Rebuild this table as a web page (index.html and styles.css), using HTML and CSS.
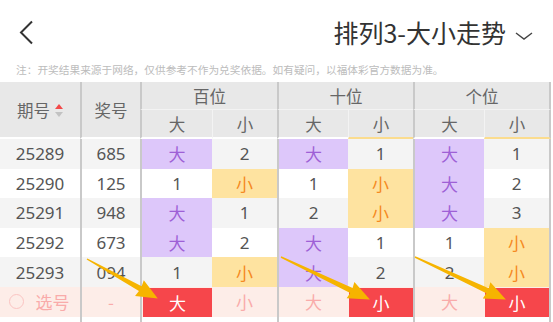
FILE: index.html
```html
<!DOCTYPE html>
<html lang="zh">
<head>
<meta charset="utf-8">
<link rel="stylesheet" href="styles.css">
</head>
<body>
<div class="page">
  <header class="topbar">
    <svg class="back" width="16" height="26" viewBox="0 0 16 26"><path d="M13 1.5 L2 12.5 L13 23.5" fill="none" stroke="#333" stroke-width="2"/></svg>
    <div class="title-wrap">
      <span class="title">排列3-大小走势</span>
      <svg class="chev" width="18" height="8" viewBox="0 0 18 8"><path d="M1 1 L9 7 L17 1" fill="none" stroke="#444" stroke-width="1.4"/></svg>
    </div>
  </header>
  <p class="note">注：开奖结果来源于网络，仅供参考不作为兑奖依据。如有疑问，以福体彩官方数据为准。</p>

  <div class="table">
    <div class="th span2 c1"><span>期号</span><span class="sort"><i class="up"></i><i class="down"></i></span></div>
    <div class="th span2 c2 sep">奖号</div>
    <div class="th grp sep">百位</div>
    <div class="th grp sep">十位</div>
    <div class="th grp sep last">个位</div>
    <div class="th sub sep">大</div><div class="th sub inner">小</div>
    <div class="th sub sep">大</div><div class="th sub inner mark">小</div>
    <div class="th sub sep">大</div><div class="th sub inner mark last">小</div>

    <div class="td g">25289</div><div class="td g sep">685</div>
    <div class="td g sep big">大</div><div class="td g">2</div>
    <div class="td g sep big">大</div><div class="td g">1</div>
    <div class="td g sep big">大</div><div class="td g last">1</div>

    <div class="td">25290</div><div class="td sep">125</div>
    <div class="td sep">1</div><div class="td small">小</div>
    <div class="td sep">1</div><div class="td small">小</div>
    <div class="td sep big">大</div><div class="td last">2</div>

    <div class="td g">25291</div><div class="td g sep">948</div>
    <div class="td g sep big">大</div><div class="td g">1</div>
    <div class="td g sep">2</div><div class="td g small">小</div>
    <div class="td g sep big">大</div><div class="td g last">3</div>

    <div class="td">25292</div><div class="td sep">673</div>
    <div class="td sep big">大</div><div class="td">2</div>
    <div class="td sep big">大</div><div class="td">1</div>
    <div class="td sep">1</div><div class="td small last">小</div>

    <div class="td g">25293</div><div class="td g sep">094</div>
    <div class="td g sep">1</div><div class="td g small">小</div>
    <div class="td g sep big">大</div><div class="td g">2</div>
    <div class="td g sep">2</div><div class="td g small last">小</div>

    <div class="td pick c1"><span class="circle"></span><span>选号</span></div><div class="td pick sep">-</div>
    <div class="td pick sep"><span class="sel">大</span></div><div class="td pick">小</div>
    <div class="td pick sep">大</div><div class="td pick"><span class="sel">小</span></div>
    <div class="td pick sep">大</div><div class="td pick last"><span class="sel">小</span></div>

    <div class="tail"></div><div class="tail sep"></div><div class="tail sep"></div><div class="tail"></div><div class="tail sep"></div><div class="tail"></div><div class="tail sep"></div><div class="tail last"></div>
  </div>

  <svg class="arrows" width="553" height="322" viewBox="0 0 553 322">
    <g fill="#f6b400">
      <g transform="translate(87 259) rotate(29.1)"><polygon points="0,-0.7 61,-2.8 60,-9 81,0 60,9 61,2.8 0,0.7"/></g>
      <g transform="translate(281 257) rotate(25.5)"><polygon points="0,-0.7 78,-2.8 77,-9 98.5,0 77,9 78,2.8 0,0.7"/></g>
      <g transform="translate(415 257) rotate(25)"><polygon points="0,-0.7 80,-2.8 79,-9 100.3,0 79,9 80,2.8 0,0.7"/></g>
    </g>
  </svg>
</div>
</body>
</html>
```

FILE: styles.css
```css
* { box-sizing: border-box; margin: 0; padding: 0; }
html, body { background: #fff; }
body {
  font-family: "Noto Sans", "Noto Sans CJK SC", sans-serif;
  width: 553px;
  height: 322px;
  overflow: hidden;
}
.page { position: relative; width: 553px; height: 322px; }

.topbar {
  height: 62px;
  display: flex;
  align-items: center;
  justify-content: space-between;
  padding: 3px 20px 0 19px;
}
.back { display: block; }
.title-wrap { display: flex; align-items: center; gap: 9px; }
.title {
  font-size: 25px;
  color: #333;
  line-height: 1;
  font-family: "Noto Sans CJK SC", "Noto Sans", sans-serif;
}
.chev { display: block; margin-top: 7px; }

.note {
  font-size: 10.7px;
  line-height: 16px;
  height: 20px;
  color: #bcbcbc;
  padding-left: 16px;
  font-family: "Noto Sans CJK SC", sans-serif;
}

.table {
  display: grid;
  width: 551px;
  grid-template-columns: 80px 60px 72px 65px 71px 65px 71px 67px;
  grid-template-rows: 28px 29px repeat(6, 29.6px) 6px;
  font-size: 17px;
  color: #555;
}
.table > div {
  display: flex;
  align-items: center;
  justify-content: center;
}
.sep { border-left: 2px solid #c9c9c9; }
.last { border-right: 2px solid #c9c9c9; }

.th { background: #e8e8e8; color: #666; font-family: "Noto Sans CJK SC", sans-serif; font-size: 16.5px; }
.span2 { grid-row: span 2; border-bottom: 2px solid #fff; }
.grp { grid-column: span 2; border-bottom: 1px solid #f3f3f3; }
.sub { border-bottom: 2px solid #fff; }
.inner { border-left: 1px solid #f3f3f3; }
.mark { border-bottom-color: #fbdc8e; }

.sort { display: inline-flex; flex-direction: column; gap: 3px; margin-left: 5px; margin-top: 1px; }
.sort i { display: block; width: 0; height: 0; border-left: 4px solid transparent; border-right: 4px solid transparent; }
.sort .up { border-bottom: 5px solid #f24a4a; }
.sort .down { border-top: 5px solid #c2c2c2; }

.td { background: #fff; }
.td.g { background: #f4f4f4; }
.td.big { background: #ddc7fa; color: #9e60d6; font-family: "Noto Sans CJK SC", sans-serif; }
.td.small { background: #fee3a0; color: #f58a22; font-family: "Noto Sans CJK SC", sans-serif; }
.td.pick { background: #fdede8; color: #f9abaa; font-family: "Noto Sans CJK SC", sans-serif; position: relative; }
.pick.c1 { gap: 12px; padding-right: 2px; }
.circle { width: 15px; height: 15px; border: 1.5px solid #fbc4c2; border-radius: 50%; }
.sel {
  position: absolute;
  left: 1px; right: 0; top: 1px; bottom: 0;
  background: #f6464b;
  color: #fff;
  display: flex;
  align-items: center;
  justify-content: center;
}
.tail { background: #fff; }

.arrows { position: absolute; left: 0; top: 0; pointer-events: none; }
```
